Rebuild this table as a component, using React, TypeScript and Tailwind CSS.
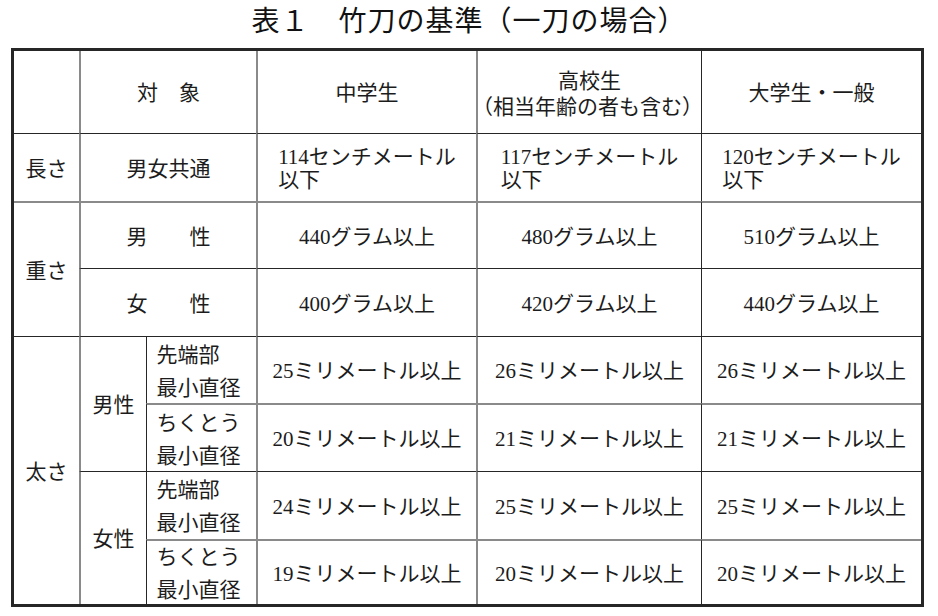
import React from "react";

const G = "border-[#8a8a8a]";
const D = "border-[#262626]";

function Cell({ className = "", children }: { className?: string; children?: React.ReactNode }) {
  return (
    <div className={`flex items-center justify-center text-center pt-[3px] ${className}`}>
      {children}
    </div>
  );
}

function Two({ a, b, lh }: { a: string; b: string; lh: string }) {
  return (
    <div className={`text-left ${lh}`}>
      <div>{a}</div>
      <div>{b}</div>
    </div>
  );
}

export default function App() {
  const mm = (n: string) => `${n}ミリメートル以上`;
  return (
    <div
      className="w-[938px] h-[616px] bg-white text-[#1c1c1c]"
      style={{ fontFamily: '"Liberation Serif", "Noto Sans CJK JP", serif' }}
    >
      <div className="h-[48px] flex items-center justify-center pb-[5px] text-[28px] font-normal tracking-[1px] text-[#111]">
        表１　竹刀の基準（一刀の場合）
      </div>
      <div className="ml-[11px] w-[913px] h-[559px] border-[3px] border-[#262626] grid grid-cols-[65px_67px_110px_220px_225px_220px] grid-rows-[82px_68px_67px_68px_67px_68px_68px_65px] text-[21px] leading-none">
        {/* header */}
        <Cell className="col-start-1 row-start-1" />
        <Cell className={`col-start-2 col-span-2 row-start-1 border-l-2 ${G}`}>対　象</Cell>
        <Cell className={`col-start-4 row-start-1 border-l-2 ${G}`}>中学生</Cell>
        <Cell className={`col-start-5 row-start-1 border-l-2 ${G}`}>
          <div className="leading-[26px]">
            <div>高校生</div>
            <div className="-ml-[6px]">（相当年齢の者も含む）</div>
          </div>
        </Cell>
        <Cell className={`col-start-6 row-start-1 border-l ${D}`}>大学生・一般</Cell>

        {/* 長さ */}
        <Cell className={`col-start-1 row-start-2 border-t ${D}`}>長さ</Cell>
        <Cell className={`col-start-2 col-span-2 row-start-2 border-t ${D} border-l-2 border-l-[#8a8a8a]`}>男女共通</Cell>
        <Cell className={`col-start-4 row-start-2 border-t ${D} border-l-2 border-l-[#8a8a8a]`}>
          <Two a="114センチメートル" b="以下" lh="leading-[23px]" />
        </Cell>
        <Cell className={`col-start-5 row-start-2 border-t ${D} border-l-2 border-l-[#8a8a8a]`}>
          <Two a="117センチメートル" b="以下" lh="leading-[23px]" />
        </Cell>
        <Cell className={`col-start-6 row-start-2 border-t ${D} border-l border-l-[#262626]`}>
          <Two a="120センチメートル" b="以下" lh="leading-[23px]" />
        </Cell>

        {/* 重さ */}
        <Cell className={`col-start-1 row-start-3 row-span-2 border-t-2 ${G}`}>重さ</Cell>
        <Cell className={`col-start-2 col-span-2 row-start-3 border-t-2 ${G} border-l-2`}>男　　性</Cell>
        <Cell className={`col-start-4 row-start-3 border-t-2 ${G} border-l-2`}>440グラム以上</Cell>
        <Cell className={`col-start-5 row-start-3 border-t-2 ${G} border-l-2`}>480グラム以上</Cell>
        <Cell className={`col-start-6 row-start-3 border-t-2 border-t-[#8a8a8a] border-l border-l-[#262626]`}>510グラム以上</Cell>

        <Cell className={`col-start-2 col-span-2 row-start-4 border-t border-t-[#262626] border-l-2 border-l-[#8a8a8a]`}>女　　性</Cell>
        <Cell className={`col-start-4 row-start-4 border-t border-t-[#262626] border-l-2 border-l-[#8a8a8a]`}>400グラム以上</Cell>
        <Cell className={`col-start-5 row-start-4 border-t border-t-[#262626] border-l-2 border-l-[#8a8a8a]`}>420グラム以上</Cell>
        <Cell className={`col-start-6 row-start-4 border-t border-l ${D}`}>440グラム以上</Cell>

        {/* 太さ */}
        <Cell className={`col-start-1 row-start-5 row-span-4 border-t ${D}`}>太さ</Cell>
        <Cell className={`col-start-2 row-start-5 row-span-2 border-t border-t-[#262626] border-l-2 border-l-[#8a8a8a]`}>男性</Cell>
        <Cell className={`col-start-3 row-start-5 border-t border-l ${D} pr-[6px]`}>
          <Two a="先端部" b="最小直径" lh="leading-[33px]" />
        </Cell>
        <Cell className={`col-start-4 row-start-5 border-t border-t-[#262626] border-l-2 border-l-[#8a8a8a]`}>{mm("25")}</Cell>
        <Cell className={`col-start-5 row-start-5 border-t border-t-[#262626] border-l-2 border-l-[#8a8a8a]`}>{mm("26")}</Cell>
        <Cell className={`col-start-6 row-start-5 border-t border-l ${D}`}>{mm("26")}</Cell>

        <Cell className={`col-start-3 row-start-6 border-t-2 border-t-[#8a8a8a] border-l border-l-[#262626] pr-[6px]`}>
          <Two a="ちくとう" b="最小直径" lh="leading-[33px]" />
        </Cell>
        <Cell className={`col-start-4 row-start-6 border-t-2 ${G} border-l-2`}>{mm("20")}</Cell>
        <Cell className={`col-start-5 row-start-6 border-t-2 ${G} border-l-2`}>{mm("21")}</Cell>
        <Cell className={`col-start-6 row-start-6 border-t-2 border-t-[#8a8a8a] border-l border-l-[#262626]`}>{mm("21")}</Cell>

        <Cell className={`col-start-2 row-start-7 row-span-2 border-t border-t-[#262626] border-l-2 border-l-[#8a8a8a]`}>女性</Cell>
        <Cell className={`col-start-3 row-start-7 border-t border-l ${D} pr-[6px]`}>
          <Two a="先端部" b="最小直径" lh="leading-[33px]" />
        </Cell>
        <Cell className={`col-start-4 row-start-7 border-t border-t-[#262626] border-l-2 border-l-[#8a8a8a]`}>{mm("24")}</Cell>
        <Cell className={`col-start-5 row-start-7 border-t border-t-[#262626] border-l-2 border-l-[#8a8a8a]`}>{mm("25")}</Cell>
        <Cell className={`col-start-6 row-start-7 border-t border-l ${D}`}>{mm("25")}</Cell>

        <Cell className={`col-start-3 row-start-8 border-t-2 border-t-[#8a8a8a] border-l border-l-[#262626] pr-[6px]`}>
          <Two a="ちくとう" b="最小直径" lh="leading-[33px]" />
        </Cell>
        <Cell className={`col-start-4 row-start-8 border-t-2 ${G} border-l-2`}>{mm("19")}</Cell>
        <Cell className={`col-start-5 row-start-8 border-t-2 ${G} border-l-2`}>{mm("20")}</Cell>
        <Cell className={`col-start-6 row-start-8 border-t-2 border-t-[#8a8a8a] border-l border-l-[#262626]`}>{mm("20")}</Cell>
      </div>
    </div>
  );
}
